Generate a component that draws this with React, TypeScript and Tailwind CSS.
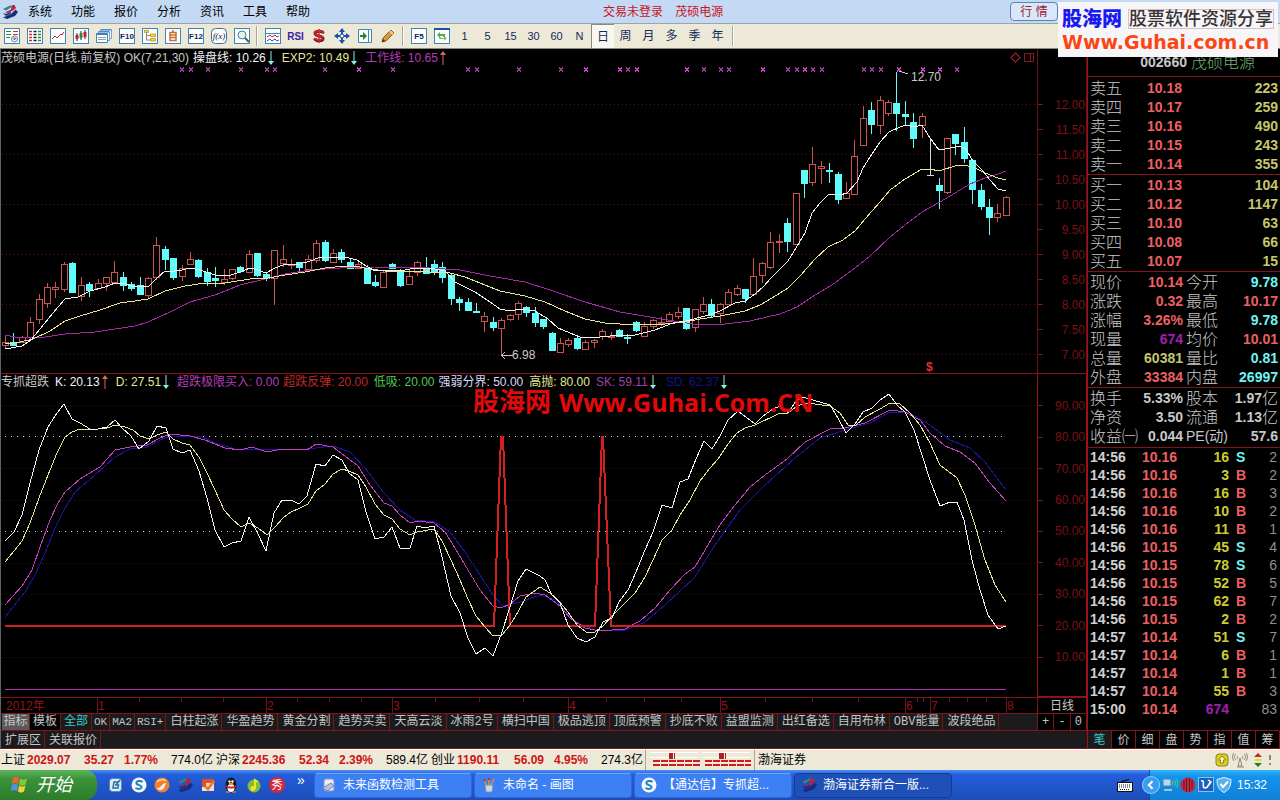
import type { ReactNode } from 'react';
import cls from 'clsx';

type Point = [number, number];
// kind, high, body top, body bottom, low
type Candle = ['u' | 'd' | 'w', number, number, number, number];

const candles: Candle[] = [
  ['u', 335, 342, 345, 349], ['d', 333, 342, 345, 346], ['u', 336, 337, 342, 343], ['u', 317, 322, 337, 340],
  ['u', 294, 299, 319, 324], ['u', 283, 287, 303, 308], ['u', 282, 287, 289, 298], ['u', 262, 264, 289, 292],
  ['d', 262, 263, 292, 292], ['u', 277, 285, 296, 301], ['d', 282, 284, 290, 297], ['u', 279, 283, 288, 289],
  ['u', 277, 277, 283, 291], ['u', 261, 272, 282, 282], ['d', 272, 277, 285, 291], ['d', 282, 284, 288, 291],
  ['d', 277, 285, 294, 294], ['u', 277, 278, 295, 299], ['u', 237, 245, 277, 280], ['d', 246, 249, 259, 270],
  ['d', 258, 258, 277, 280], ['u', 265, 268, 276, 281], ['u', 252, 259, 264, 264], ['d', 259, 260, 276, 278],
  ['d', 268, 272, 281, 286], ['d', 267, 278, 280, 287], ['u', 269, 279, 282, 285], ['u', 269, 269, 278, 280],
  ['d', 266, 267, 271, 273], ['u', 250, 254, 272, 273], ['d', 253, 253, 275, 277], ['d', 273, 274, 278, 281],
  ['u', 250, 250, 278, 305], ['u', 245, 259, 263, 267], ['u', 259, 264, 265, 269], ['d', 262, 262, 267, 272],
  ['u', 255, 259, 269, 270], ['u', 240, 243, 260, 263], ['d', 240, 242, 260, 262], ['u', 249, 253, 262, 263],
  ['d', 249, 252, 259, 263], ['d', 258, 262, 268, 268], ['u', 262, 264, 268, 268], ['d', 265, 268, 283, 283],
  ['d', 275, 282, 285, 287], ['u', 270, 272, 287, 287], ['d', 263, 264, 268, 268], ['d', 269, 272, 285, 287],
  ['u', 270, 276, 284, 284], ['u', 261, 262, 272, 276], ['d', 257, 268, 273, 273], ['d', 260, 264, 272, 275],
  ['d', 262, 267, 277, 283], ['d', 273, 275, 298, 305], ['d', 297, 299, 302, 311], ['d', 298, 302, 310, 310],
  ['d', 303, 311, 312, 312], ['u', 312, 316, 321, 332], ['d', 317, 322, 327, 331], ['u', 318, 320, 328, 356],
  ['u', 314, 315, 319, 321], ['u', 301, 303, 314, 320], ['d', 306, 307, 312, 317], ['d', 307, 313, 322, 327],
  ['d', 319, 319, 326, 329], ['d', 332, 333, 350, 350], ['u', 338, 343, 352, 352], ['u', 338, 340, 344, 347],
  ['d', 335, 338, 348, 350], ['u', 340, 342, 349, 349], ['u', 339, 340, 342, 348], ['u', 329, 331, 336, 340],
  ['u', 332, 336, 337, 340], ['d', 329, 330, 336, 337], ['d', 334, 337, 338, 344], ['d', 321, 322, 330, 332],
  ['u', 322, 326, 336, 337], ['u', 319, 320, 326, 329], ['u', 317, 322, 323, 326], ['u', 312, 314, 321, 321],
  ['u', 307, 312, 316, 319], ['d', 308, 308, 328, 330], ['u', 309, 309, 327, 332], ['u', 297, 304, 311, 314],
  ['d', 299, 304, 315, 318], ['u', 303, 304, 313, 323], ['u', 289, 292, 304, 304], ['u', 285, 288, 294, 296],
  ['d', 289, 289, 298, 303], ['u', 258, 276, 294, 294], ['u', 262, 263, 275, 283], ['u', 232, 242, 267, 269],
  ['u', 234, 241, 242, 253], ['d', 218, 223, 241, 252], ['u', 193, 193, 244, 244], ['d', 170, 170, 183, 198],
  ['u', 147, 164, 182, 186], ['u', 161, 166, 168, 184], ['d', 163, 170, 171, 183], ['d', 172, 174, 199, 204],
  ['u', 182, 193, 198, 198], ['u', 140, 156, 194, 194], ['u', 106, 118, 145, 145], ['d', 102, 110, 124, 134],
  ['u', 96, 100, 125, 134], ['u', 100, 102, 113, 116], ['d', 72, 103, 113, 131], ['d', 101, 114, 116, 126],
  ['d', 113, 122, 138, 148], ['u', 113, 116, 125, 138], ['w', 139, 175, 175, 175], ['d', 178, 185, 190, 209],
  ['u', 138, 138, 192, 194], ['d', 134, 134, 143, 155], ['d', 127, 142, 158, 163], ['d', 159, 160, 189, 204],
  ['d', 184, 190, 206, 210], ['d', 199, 207, 217, 235], ['u', 204, 213, 217, 222], ['u', 196, 197, 215, 215],
];

const maFast: Point[] = [
  [5, 349], [22, 346], [31, 340], [40, 329], [53, 313], [65, 299], [78, 297], [90, 291], [105, 287], [115, 283],
  [123, 283], [135, 287], [149, 286], [157, 278], [165, 271], [175, 271], [182, 270], [190, 268], [200, 270],
  [215, 275], [228, 276], [240, 272], [250, 268], [258, 270], [266, 273], [275, 268], [283, 265], [300, 264],
  [310, 261], [318, 258], [334, 257], [345, 257], [357, 260], [366, 266], [375, 271], [385, 270], [400, 271],
  [415, 268], [430, 268], [445, 271], [455, 282], [475, 292], [490, 302], [500, 309], [510, 311], [520, 309],
  [535, 311], [548, 319], [558, 328], [570, 333], [580, 337], [590, 338], [610, 336], [635, 335], [655, 330],
  [673, 323], [686, 321], [705, 316], [720, 311], [735, 303], [745, 301], [755, 294], [763, 287], [771, 278],
  [780, 269], [788, 261], [796, 248], [805, 233], [812, 213], [820, 203], [829, 194], [840, 195], [847, 193],
  [857, 182], [863, 168], [872, 154], [880, 142], [889, 132], [900, 127], [906, 125], [915, 127], [922, 125],
  [930, 138], [939, 150], [945, 149], [960, 146], [966, 149], [972, 160], [982, 170], [990, 180], [998, 189],
  [1006, 191],
];
const maMid: Point[] = [
  [5, 344], [20, 342], [33, 339], [50, 331], [65, 321], [80, 316], [100, 310], [120, 303], [135, 301], [148, 299],
  [165, 291], [185, 286], [205, 283], [225, 283], [250, 279], [268, 278], [285, 275], [305, 272], [325, 268],
  [345, 266], [360, 267], [370, 269], [385, 271], [400, 271], [430, 272], [450, 273], [465, 277], [475, 281],
  [500, 291], [525, 296], [545, 302], [565, 311], [585, 319], [605, 323], [635, 325], [665, 324], [685, 322],
  [700, 319], [720, 316], [745, 311], [760, 305], [772, 298], [788, 288], [800, 276], [815, 259], [828, 247],
  [843, 240], [855, 231], [865, 219], [880, 202], [890, 190], [905, 179], [922, 169], [930, 169], [939, 171],
  [955, 166], [965, 165], [975, 168], [985, 173], [998, 178], [1006, 180],
];
const maSlow: Point[] = [
  [5, 335], [20, 338], [45, 337], [65, 334], [95, 332], [115, 329], [135, 326], [148, 322], [170, 312], [190, 302],
  [215, 295], [240, 285], [265, 279], [285, 274], [310, 270], [340, 268], [375, 267], [400, 267], [430, 268],
  [460, 270], [490, 276], [525, 282], [550, 290], [585, 302], [620, 312], [650, 317], [680, 322], [700, 325],
  [725, 324], [750, 321], [780, 314], [797, 307], [812, 297], [835, 283], [855, 268], [870, 256], [890, 237],
  [905, 225], [922, 212], [940, 202], [955, 193], [970, 184], [985, 178], [998, 174], [1006, 171],
];
const lineK: Point[] = [
  [5, 541], [14, 532], [22, 515], [30, 483], [39, 450], [48, 427], [57, 413], [64, 404], [72, 419], [80, 423],
  [90, 429], [98, 429], [107, 427], [115, 420], [122, 428], [131, 436], [139, 449], [149, 441], [157, 426],
  [166, 428], [173, 449], [182, 453], [190, 450], [199, 471], [207, 498], [215, 530], [224, 547], [232, 543],
  [241, 541], [249, 517], [258, 534], [266, 551], [274, 513], [282, 500], [291, 500], [299, 504], [307, 496],
  [316, 464], [325, 466], [333, 455], [342, 460], [349, 473], [358, 480], [366, 512], [375, 539], [384, 537],
  [392, 527], [400, 548], [410, 548], [417, 526], [425, 528], [434, 526], [442, 557], [451, 596], [460, 613],
  [468, 638], [476, 654], [485, 648], [493, 656], [502, 632], [510, 607], [518, 581], [526, 569], [540, 576],
  [545, 580], [552, 595], [560, 603], [568, 625], [577, 638], [586, 642], [595, 637], [603, 622], [612, 618],
  [619, 602], [628, 590], [636, 572], [645, 550], [653, 532], [662, 505], [672, 508], [680, 482], [688, 479],
  [696, 459], [704, 441], [712, 449], [720, 436], [728, 420], [738, 411], [755, 424], [763, 416], [773, 409],
  [780, 406], [788, 413], [796, 401], [803, 397], [813, 400], [830, 405], [838, 418], [846, 433], [855, 424],
  [863, 412], [872, 408], [880, 400], [889, 394], [897, 405], [905, 412], [914, 430], [922, 455], [930, 480],
  [940, 506], [950, 502], [957, 502], [964, 520], [972, 560], [980, 590], [988, 615], [998, 629], [1006, 626],
];
const lineD: Point[] = [
  [5, 562], [14, 551], [22, 541], [30, 523], [39, 498], [48, 475], [57, 453], [65, 437], [72, 432], [80, 429],
  [98, 429], [107, 428], [115, 425], [125, 427], [133, 430], [140, 436], [149, 439], [157, 435], [166, 432],
  [173, 439], [182, 443], [190, 445], [199, 457], [207, 473], [215, 490], [224, 510], [232, 519], [241, 527],
  [249, 523], [258, 528], [267, 535], [275, 527], [283, 518], [291, 512], [300, 508], [308, 504], [316, 491],
  [325, 484], [333, 474], [342, 469], [349, 471], [358, 475], [366, 487], [375, 504], [384, 515], [392, 519],
  [400, 529], [410, 535], [417, 532], [434, 529], [442, 541], [451, 560], [460, 580], [468, 599], [476, 616],
  [485, 627], [493, 636], [502, 635], [510, 625], [518, 612], [526, 597], [540, 587], [550, 593], [558, 600],
  [568, 612], [577, 625], [586, 632], [595, 632], [603, 626], [612, 616], [620, 608], [635, 593], [645, 577],
  [653, 560], [662, 540], [672, 530], [680, 515], [690, 500], [700, 481], [710, 468], [718, 459], [728, 444],
  [737, 433], [745, 428], [755, 425], [778, 414], [788, 413], [797, 406], [807, 403], [830, 406], [840, 413],
  [848, 425], [856, 425], [865, 417], [880, 409], [890, 403], [900, 404], [910, 413], [920, 425], [930, 443],
  [940, 465], [957, 478], [965, 495], [975, 525], [985, 560], [995, 585], [1006, 602],
];
const lineSK: Point[] = [
  [5, 605], [22, 586], [32, 570], [40, 547], [50, 520], [58, 503], [65, 492], [80, 479], [100, 467], [115, 450],
  [130, 447], [147, 445], [160, 438], [170, 434], [190, 436], [205, 440], [225, 448], [240, 450], [252, 447],
  [267, 452], [282, 449], [307, 450], [316, 444], [333, 447], [345, 456], [358, 466], [370, 485], [384, 503],
  [392, 506], [400, 515], [410, 523], [418, 521], [434, 523], [445, 532], [455, 548], [468, 570], [480, 590],
  [493, 606], [501, 608], [510, 604], [520, 596], [535, 593], [545, 595], [560, 606], [570, 618], [585, 628],
  [600, 631], [625, 629], [640, 621], [655, 608], [670, 590], [685, 574], [695, 567], [705, 550], [720, 525],
  [735, 505], [750, 487], [765, 475], [787, 459], [805, 442], [830, 429], [845, 428], [865, 423], [890, 410],
  [905, 412], [920, 420], [930, 433], [945, 446], [960, 452], [975, 463], [990, 483], [1006, 501],
];
const lineSD: Point[] = [
  [5, 617], [25, 592], [35, 575], [45, 553], [55, 528], [65, 508], [75, 492], [95, 475], [115, 457], [130, 449],
  [147, 447], [160, 440], [170, 436], [200, 436], [215, 443], [235, 449], [265, 449], [307, 449], [333, 446],
  [350, 452], [365, 468], [384, 493], [400, 510], [415, 520], [435, 522], [450, 532], [465, 552], [480, 575],
  [493, 595], [503, 606], [520, 602], [540, 595], [555, 600], [575, 622], [595, 630], [625, 630], [645, 622],
  [665, 605], [695, 577], [715, 545], [740, 510], [765, 485], [795, 458], [820, 438], [845, 430], [870, 423],
  [890, 412], [910, 413], [930, 425], [950, 440], [970, 448], [985, 462], [1006, 490],
];
const signal: Point[] = [
  [5, 626], [494, 626], [501, 437], [503, 437], [510, 626], [595, 626], [602, 437], [603, 437], [611, 626], [1006, 626],
];

const marks = [
  182, 191, 208, 241, 267, 275, 325, 359, 393, 468, 477, 519, 561, 586, 620, 628, 637, 687, 704, 721, 729, 763, 788,
  797, 805, 813, 822, 864, 872, 881, 899, 923, 940, 957,
];
const boldMarks = [359, 586, 620, 637, 687, 763, 805, 899, 923, 940];

const menus = ['系统', '功能', '报价', '分析', '资讯', '工具', '帮助'];
const periods = ['1', '5', '15', '30', '60', 'N', '日', '周', '月', '多', '季', '年'];
const prices = ['12.00', '11.50', '11.00', '10.50', '10.00', '9.50', '9.00', '8.50', '8.00', '7.50', '7.00'];
const levels = ['90.00', '80.00', '70.00', '60.00', '50.00', '40.00', '30.00', '20.00', '10.00'];
const months: [string, number][] = [['1', 97], ['2', 266], ['3', 392], ['4', 568], ['5', 720], ['6', 905], ['7', 930], ['8', 1006]];
const minorTicks = [139, 181, 223, 297, 329, 361, 435, 479, 523, 606, 644, 681, 765, 812, 858, 917, 923, 949, 967, 986];

const templates = [
  'OK', 'MA2', 'RSI+', '白柱起涨', '华盈趋势', '黄金分割', '趋势买卖', '天高云淡', '冰雨2号', '横扫中国', '极品逃顶',
  '顶底预警', '抄底不败', '益盟监测', '出红备选', '自用布林', 'OBV能量', '波段绝品',
];

const asks = [['卖五', '10.18', '223'], ['卖四', '10.17', '259'], ['卖三', '10.16', '490'], ['卖二', '10.15', '243'], ['卖一', '10.14', '355']];
const bids = [['买一', '10.13', '104'], ['买二', '10.12', '1147'], ['买三', '10.10', '63'], ['买四', '10.08', '66'], ['买五', '10.07', '15']];

const RED = 'text-[#ee6060]';
const CYAN = 'text-[#6ff5f5]';
const GREY = 'text-[#c8c8c8]';
const PURPLE = 'text-[#a01fb0]';

const stats = [
  ['现价', '10.14', RED, '今开', '9.78', CYAN],
  ['涨跌', '0.32', RED, '最高', '10.17', RED],
  ['涨幅', '3.26%', RED, '最低', '9.78', CYAN],
  ['现量', '674', PURPLE, '均价', '10.01', RED],
  ['总量', '60381', 'text-[#c6c66c]', '量比', '0.81', CYAN],
  ['外盘', '33384', RED, '内盘', '26997', CYAN],
];
const ratios = [
  ['换手', '5.33%', GREY, '股本', '1.97亿', GREY],
  ['净资', '3.50', GREY, '流通', '1.13亿', GREY],
  ['收益㈠', '0.044', GREY, 'PE(动)', '57.6', GREY],
];
const trades = [
  ['14:56', '10.16', '16', 'S', '2'],
  ['14:56', '10.16', '3', 'B', '2'],
  ['14:56', '10.16', '16', 'B', '3'],
  ['14:56', '10.16', '10', 'B', '2'],
  ['14:56', '10.16', '11', 'B', '1'],
  ['14:56', '10.15', '45', 'S', '4'],
  ['14:56', '10.15', '78', 'S', '6'],
  ['14:56', '10.15', '52', 'B', '5'],
  ['14:56', '10.15', '62', 'B', '7'],
  ['14:56', '10.15', '2', 'B', '2'],
  ['14:57', '10.14', '51', 'S', '7'],
  ['14:57', '10.14', '6', 'B', '1'],
  ['14:57', '10.14', '1', 'B', '1'],
  ['14:57', '10.14', '55', 'B', '3'],
  ['15:00', '10.14', '674', '', '83'],
];

const indexes = [
  ['上证', '2029.07', '35.27', '1.77%', '774.0亿'],
  ['沪深', '2245.36', '52.34', '2.39%', '589.4亿'],
  ['创业', '1190.11', '56.09', '4.95%', '274.3亿'],
];

function Icon({ children, size = 16 }: { children: ReactNode; size?: number }) {
  return (
    <svg width={size} height={size} viewBox="0 0 16 16" fill="none" aria-hidden="true">
      {children}
    </svg>
  );
}

function Frame() {
  return <rect x="0.5" y="0.5" width="15" height="15" fill="#fff" stroke="#3f86b8" />;
}

function FrameText({ children }: { children: string }) {
  return (
    <Icon>
      <Frame />
      <text x="8" y="11" textAnchor="middle" fontSize="8" fill="#101a60" fontFamily="Liberation Sans" fontWeight="700">
        {children}
      </text>
    </Icon>
  );
}

function BrandMark() {
  return (
    <Icon>
      <path d="M1 5 8 1.500l2.500 1L4 6.500z" fill="#2c8a82" />
      <path d="M10 1h2.500l1.500 3-3 2.500-5 2.500-3-.5 6-3z" fill="#c01f36" />
      <path d="M13.500 5.500 16 8l-3 4-8 3-4-1.500L9 10z" fill="#1c2a78" />
      <path d="M1 9l3 1 5-2v1.500L4 12z" fill="#1c2a78" />
    </Icon>
  );
}

const mainTools: [string, ReactNode][] = [
  ['行情', <Icon key="a"><Frame /><path d="M2 3.5h5M2 6.5h5M2 9.5h4" stroke="#2b8a3a" /><path d="M9 3.5h5M9 6.5h5" stroke="#d03030" /><circle cx="10.500" cy="11" r="3" fill="#e8eef4" stroke="#6a88a8" /><path d="M10 9.500v2l2-1" stroke="#456" /></Icon>],
  ['列表', <Icon key="b"><Frame /><path d="M2 3.5h3M2 6.500h3M2 9.500h3M2 12.500h3" stroke="#d03030" strokeWidth="1.500" /><path d="M6.500 3.500h3M6.500 6.500h3M6.500 9.500h3M6.500 12.500h3" stroke="#222" strokeWidth="1.500" /><path d="M11 3.500h3M11 6.500h3M11 9.500h3M11 12.500h3" stroke="#2b8a3a" strokeWidth="1.500" /></Icon>],
  ['分时', <Icon key="c"><Frame /><path d="M2 11l3-3 2 2 4-4 1 1 2-3" stroke="#c02838" /></Icon>],
  ['K线', <Icon key="d"><Frame /><path d="M4 5v8M8 3v9M12 2v9" stroke="#222" /><path d="M2.500 7h3v4h-3z" fill="#c02030" /><path d="M6.500 5h3v5h-3z" fill="#2b8a3a" /><path d="M10.500 4h3v5h-3z" fill="#c02030" /></Icon>],
  ['多窗口', <Icon key="e"><path d="M4.500 1.500h11v9h-11z" fill="#fff" stroke="#6aa0cc" /><path d="M2.500 3.500h11v9h-11z" fill="#fff" stroke="#6aa0cc" /><path d="M.5 5.500h11v9H.5z" fill="#fff" stroke="#3f86b8" /><path d="M1 6.500h10M3 4h10M5 2h10" stroke="#3878c8" /><path d="M2 9.500h8M2 11.500h8" stroke="#999" /></Icon>],
  ['F10', <FrameText key="f">F10</FrameText>],
  ['板块', <Icon key="g"><Frame /><path d="M4.500 4v8.500M4.500 7.500h4M4.500 12h4" stroke="#888" /><path d="M2.500 2.500h4v2h-4zM8.500 6h5v2.500h-5zM8.500 10.500h5V13h-5z" fill="#f5dc60" stroke="#c8a020" /></Icon>],
  ['自选', <Icon key="h"><Frame /><path d="M5 4.500h6v8H5zM5 7h6M5 9.500h6M8 2v2.500" stroke="#c87030" strokeWidth="1.500" /></Icon>],
  ['F12', <FrameText key="i">F12</FrameText>],
  ['公式', <Icon key="j"><rect x="0.5" y="0.5" width="15" height="15" rx="4" fill="#fff" stroke="#3f6f98" /><text x="8" y="11" textAnchor="middle" fontSize="9" fontStyle="italic" fill="#101a40" fontFamily="Liberation Serif">f(x)</text></Icon>],
  ['查找', <Icon key="k"><Frame /><circle cx="8" cy="7" r="4" fill="#dff3f3" stroke="#4a8088" /><path d="M11 10l4 4" stroke="#555" strokeWidth="2" /></Icon>],
];
const drawTools: [string, ReactNode][] = [
  ['指标', <Icon key="a"><Frame /><path d="M1 5.500h14" stroke="#3f86b8" /><path d="M2 9l3-2 2 2 3-2 2 2 2-1" stroke="#c02838" /><path d="M2 13l3-2 2 2 3-2 2 2 2-1" stroke="#3050a0" /></Icon>],
  ['RSI', <span key="b" className="font-['Liberation_Sans'] text-[10px] font-bold text-[#3c1fa0]">RSI</span>],
  ['除权', <Icon key="c"><path d="M12 5.500c0-3-8-3-8 0s8 2 8 5-7 3-8.500 0" stroke="#7a1418" strokeWidth="3" /><path d="M11.500 5c0-3-7.500-3-7.500 0s7.500 2.500 7.500 5-7 2.500-8 0M8 1v14" stroke="#d02830" strokeWidth="1.500" /></Icon>],
  ['移动', <Icon key="d"><path d="M8 0l3 4H9v3h3V5l4 3-4 3V9H9v3h2l-3 4-3-4h2V9H4v2L0 8l4-3v2h3V4H5z" fill="#1c50b0" /><circle cx="8" cy="8" r="2" fill="#fff" stroke="#1c50b0" /></Icon>],
  ['插入', <Icon key="e"><path d="M1.500 1.500h10v13h-10zM11.500 1.500h3v13h-3z" fill="#fff" stroke="#3f86b8" /><path d="M3 7h3V4l4 4-4 4V9H3z" fill="#1e8a2a" /></Icon>],
  ['画线', <Icon key="f"><path d="M2 14l1-4 8-8 3 3-8 8z" fill="#d89840" stroke="#8a5a20" /><path d="M10 3l3 3" stroke="#f0d090" strokeWidth="2" /><path d="M2 14l1-3 2 2z" fill="#402a10" /></Icon>],
];
const pageTools: [string, ReactNode][] = [
  ['F5', <FrameText key="a">F5</FrameText>],
  ['刷新', <Icon key="b"><Frame /><path d="M0 0h16v2H0z" fill="#1c50a0" /><path d="M3 7l3-3v2h5v3H9V8H6v2z" fill="#4cae4c" /><path d="M13 10l-3 3v-2H5V9h2v1h3V8z" fill="#78c858" /></Icon>],
];

function ToolButton({ name, children }: { name: string; children: ReactNode }) {
  return (
    <button aria-label={name} className="flex h-6 w-[23px] items-center justify-center">
      {children}
    </button>
  );
}

function Divider() {
  return <div className="mx-[3px] h-5 w-0.5 border-l border-[#a8a594] bg-white" />;
}

function MenuBar() {
  return (
    <header className="flex h-[23px] items-center bg-[#c4daf4] text-xs text-black">
      <div className="flex w-[28px] shrink-0 pl-0.5">
        <BrandMark />
      </div>
      <nav className="flex gap-[19px]">
        {menus.map(m => (
          <button key={m}>{m}</button>
        ))}
      </nav>
      <div className="ml-[293px] flex gap-3 text-[#c8141e]">
        <span>交易未登录</span>
        <span>茂硕电源</span>
      </div>
      <button className="mr-[222px] ml-auto h-[19px] w-[48px] rounded border border-[#5a86b4] bg-[#d8e8fa] text-[#a02030]">
        行 情
      </button>
    </header>
  );
}

function ToolBar() {
  return (
    <div className="flex h-[26px] items-center border-t border-b border-t-[#9aa4ac] border-b-[#8c8a7c] bg-[#ece9d8] text-[11px] text-[#14285a]">
      {mainTools.map(([name, icon]) => (
        <ToolButton key={name} name={name}>{icon}</ToolButton>
      ))}
      <Divider />
      {drawTools.map(([name, icon]) => (
        <ToolButton key={name} name={name}>{icon}</ToolButton>
      ))}
      <Divider />
      {pageTools.map(([name, icon]) => (
        <ToolButton key={name} name={name}>{icon}</ToolButton>
      ))}
      {periods.map(p => (
        <button
          key={p}
          className={cls(
            'h-6 w-[23px]',
            p === '日' && 'border-t border-l border-[#8c8a7c] bg-[#f8f7f2]',
            /[^\w]/.test(p) && 'text-xs',
          )}
        >
          {p}
        </button>
      ))}
      <Divider />
    </div>
  );
}

function Banner() {
  return (
    <div className="absolute top-0.5 right-0.5 flex h-[55px] w-[220px] flex-col bg-[#f6f6f8] px-1 pt-1 whitespace-nowrap">
      <div className="flex h-[26px] items-center justify-between">
        <span className="text-[20px] leading-6 font-black text-[#1a1af0]">股海网</span>
        <span className="border border-[#d8c0c0] text-[18px] leading-[18px] font-medium text-[#3a3438]">股票软件资源分享</span>
      </div>
      <span className="font-['DejaVu_Sans'] text-[19px] leading-5 font-bold text-[#fa4614]">Www.Guhai.com.cn</span>
    </div>
  );
}

function Arrow({ up }: { up?: boolean }) {
  return (
    <svg width="6" height="14" viewBox="0 0 6 14" className="mx-0.5" aria-hidden="true">
      {up ? (
        <path d="M2.500 14V4H0L3 0l3 4H3.500v10z" fill="#e06464" />
      ) : (
        <path d="M2.500 0v10H0l3 4 3-4H3.500V0z" fill="#8ef0e0" />
      )}
    </svg>
  );
}

function Line({ points, color, width = 1 }: { points: Point[]; color: string; width?: number }) {
  return <polyline points={points.map(p => p.join(',')).join(' ')} fill="none" stroke={color} strokeWidth={width} />;
}

function Axis({ labels, className, bright }: { labels: string[]; className: string; bright?: boolean }) {
  const border = bright ? 'border-[#a01010]' : 'border-[#6c1018]';
  return (
    <div className={cls('flex w-[50px] shrink-0 flex-col border-x text-xs text-[#7c1016]', border, className)}>
      {labels.map(l => (
        <div key={l} className="flex flex-1 items-center justify-between pr-px">
          <span className="h-px w-[5px] bg-[#8c1018]" />
          {l}
        </div>
      ))}
    </div>
  );
}

function PriceChart() {
  return (
    <section className="flex border-b border-[#801418]">
      <div className="relative min-w-0 flex-1">
        <svg viewBox="1 49 1036 324" className="block w-full" shapeRendering="crispEdges">
          {[104, 154, 204, 254, 304, 354].map(y => (
            <path key={y} d={`M2 ${y}.5H1037`} stroke="#641014" strokeDasharray="1 3" />
          ))}
          {candles.map(([kind, high, top, bottom, low], i) => {
            const x = Math.round(5 + i * 8.41);
            if (kind === 'w') {
              return <path key={i} d={`M${x + 0.5} ${high}V${low}M${x - 3} ${low}.5h7`} stroke="#d8d8d8" />;
            }
            const h = Math.max(bottom - top, 1);
            return kind === 'd' ? (
              <g key={i} fill="#62fbfb">
                <rect x={x} y={high} width="1" height={low - high} />
                <rect x={x - 3} y={top} width="7" height={h + 1} />
              </g>
            ) : (
              <g key={i} stroke="#cc5450">
                <path d={`M${x + 0.5} ${high}V${top}M${x + 0.5} ${bottom}V${low}`} />
                <rect x={x - 2.5} y={top + 0.5} width="6" height={h} fill="#000" />
              </g>
            );
          })}
          <Line points={maSlow} color="#a828ac" />
          <Line points={maMid} color="#e6e696" />
          <Line points={maFast} color="#f4f4f4" />
          {marks.map(x => (
            <path
              key={x}
              d={`M${x - 2} 67.500l4 4M${x + 2} 67.500l-4 4`}
              stroke={boldMarks.includes(x) ? '#d040d0' : '#a03ca0'}
              strokeWidth={boldMarks.includes(x) ? 2 : 1}
            />
          ))}
          <path d="M899 71l9 3M501.500 355.500h11M505 352l-3.500 3.500 3.500 3.500" stroke="#c8c8c8" fill="none" />
          <path d="M1015.500 53l4.500 4.500-4.500 4.500-4.500-4.500zM1024.500 53.500h9v8h-9zM1030.500 53.500v8" stroke="#8c1420" fill="none" />
          <g fontSize="12" fill="#c8c8c8" fontFamily="Liberation Sans">
            <text x="911" y="81">12.70</text>
            <text x="512" y="359">6.98</text>
            <text x="926" y="371" fill="#e03030" fontWeight="700">$</text>
          </g>
        </svg>
        <div className="absolute top-0 left-0 flex h-[17px] items-center text-xs whitespace-nowrap text-[#c8c8c8]">
          <span>茂硕电源(日线.前复权) OK(7,21,30)</span>
          <span className="ml-1 text-[#f4f4f4]">操盘线: 10.26</span>
          <Arrow />
          <span className="ml-1.5 text-[#e6e696]">EXP2: 10.49</span>
          <Arrow />
          <span className="ml-1.5 text-[#b43cb8]">工作线: 10.65</span>
          <Arrow up />
        </div>
      </div>
      <Axis labels={prices} className="pt-[43px] pb-[6px]" />
    </section>
  );
}

function OscillatorChart() {
  return (
    <section className="flex">
      <div className="relative min-w-0 flex-1">
        <svg viewBox="1 374 1036 323" className="block w-full" shapeRendering="crispEdges">
          {[405, 468, 500, 563, 594, 657].map(y => (
            <path key={y} d={`M2 ${y}.5H1037`} stroke="#4c0c10" strokeDasharray="1 3" />
          ))}
          {[436, 531].map(y => (
            <path key={y} d={`M5 ${y}.5H1006`} stroke="#d8d8d8" strokeDasharray="1 5" />
          ))}
          <Line points={lineSD} color="#1c14a4" />
          <Line points={lineSK} color="#c040c0" />
          <Line points={signal} color="#d42020" width={2} />
          <Line points={lineD} color="#e6e696" />
          <Line points={lineK} color="#f4f4f4" />
          <rect x="5" y="689" width="1001" height="1" fill="#b038b8" />
        </svg>
        <div className="absolute top-0 left-0 flex h-4 items-center text-xs whitespace-nowrap">
          <span className="text-[#c8c8c8]">专抓超跌</span>
          <span className="ml-1.5 text-[#f4f4f4]">K: 20.13</span>
          <Arrow up />
          <span className="ml-1.5 text-[#e6e696]">D: 27.51</span>
          <Arrow />
          <span className="ml-1.5 text-[#b43cb8]">超跌极限买入: 0.00</span>
          <span className="ml-1 text-[#c02828]">超跌反弹: 20.00</span>
          <span className="ml-1.5 text-[#50c850]">低吸: 20.00</span>
          <span className="ml-1 text-[#d8d8f4]">强弱分界: 50.00</span>
          <span className="ml-1.5 text-[#e6e696]">高抛: 80.00</span>
          <span className="ml-1.5 text-[#a040a8]">SK: 59.11</span>
          <Arrow />
          <span className="ml-2 text-[#14148c]">SD: 62.37</span>
          <Arrow />
        </div>
        <div className="absolute top-4 left-[472px] flex h-6 items-center gap-2 text-[26px] leading-6 font-bold whitespace-nowrap text-[#e00a0a]">
          <span>股海网</span>
          <span className="font-['Open_Sans'] text-[25px]">Www.Guhai.Com.CN</span>
        </div>
      </div>
      <Axis labels={levels} className="border-b pt-4 pb-[23px]" bright />
    </section>
  );
}

function Timeline() {
  return (
    <div className="flex h-4 border-t border-[#801418]">
      <div className="min-w-0 flex-1">
        <svg viewBox="1 698 1036 15" className="block w-full" shapeRendering="crispEdges">
          <path d={months.map(([, x]) => `M${x}.5 698v15`).join('')} stroke="#701218" />
          <path d={minorTicks.map(x => `M${x}.5 698v4`).join('')} stroke="#701218" />
          <g fontSize="12" fill="#8c161c" className="font-['Liberation_Sans','Noto_Sans_CJK_SC',sans-serif]">
            <text x="6" y="710">2012年</text>
            {months.map(([m, x]) => (
              <text key={m} x={x + 1} y="710">{m}</text>
            ))}
          </g>
        </svg>
      </div>
      <div className="flex w-[50px] shrink-0 items-center justify-center border-x border-[#801418] text-xs text-[#c8c8c8]">
        日线
      </div>
    </div>
  );
}

const tab = 'flex h-full items-center justify-center border-r border-[#801418]';

function TemplateTabs() {
  return (
    <>
      <div className="flex h-[17px] items-stretch border-t border-[#801418] bg-[#1b1b1d] pl-px font-['Liberation_Mono','Noto_Sans_CJK_SC',monospace] text-xs whitespace-nowrap text-[#c4c4c4]">
        <button className={cls(tab, 'w-[28px] bg-[#5a5a5c]')}>指标</button>
        <button className={cls(tab, 'w-[31px] bg-black')}>模板</button>
        <button className={cls(tab, 'w-[31px] text-[#3cc8c8]')}>全部</button>
        {templates.map(t => (
          <button key={t} className={cls(tab, /^[A-Z]+[\d+]?$/.test(t) ? 'px-0.5 text-[11px]' : 'pr-[3px] pl-1')}>
            {t}
          </button>
        ))}
        <div className="ml-auto flex w-[50px] border-x border-[#801418] bg-black">
          <button className={cls(tab, 'flex-1')}>+</button>
          <button className={cls(tab, 'flex-1')}>-</button>
          <button className="flex-1">0</button>
        </div>
      </div>
      <div className="flex h-[18px] border-t border-[#801418] bg-[#1b1b1d] text-xs text-[#c4c4c4]">
        <button className={cls(tab, 'pr-[3px] pl-1')}>扩展区</button>
        <button className={cls(tab, 'pr-[3px] pl-1')}>关联报价</button>
      </div>
    </>
  );
}

const panelTable = 'w-full table-fixed border-b border-[#801418] border-separate border-spacing-0';

function OrderBook({ rows, label, className }: { rows: string[][]; label: string; className: string }) {
  return (
    <table aria-label={label} className={cls(panelTable, className)}>
      <tbody>
        {rows.map(([name, price, volume]) => (
          <tr key={name} className="h-[19px] leading-[19px]">
            <td className="w-[50px] pl-0.5 text-base leading-[19px] font-light text-[#c8c8c8]">{name}</td>
            <td className={cls('w-[44px] text-right font-bold', RED)}>{price}</td>
            <td className="pr-0.5 text-right font-bold text-[#c6c66c]">{volume}</td>
          </tr>
        ))}
      </tbody>
    </table>
  );
}

function StatTable({ rows, label, className }: { rows: string[][]; label: string; className: string }) {
  return (
    <table aria-label={label} className={cls(panelTable, 'whitespace-nowrap', className)}>
      <tbody>
        {rows.map(([a, av, ac, b, bv, bc]) => (
          <tr key={a} className="h-[19px] leading-[19px]">
            <td className="w-[48px] pl-0.5 text-base leading-[19px] font-light text-[#c8c8c8]">{a}</td>
            <td className={cls('w-[47px] text-right font-bold', ac)}>{av}</td>
            <td className={cls('w-[50px] pl-[3px] leading-[19px] text-[#c8c8c8]', b.startsWith('PE') ? 'text-sm' : 'text-base font-light')}>{b}</td>
            <td className={cls('pr-0.5 text-right font-bold', bc)}>
              {bv.replace('亿', '')}
              {bv.endsWith('亿') && <span className="align-top text-base leading-[19px] font-light">亿</span>}
            </td>
          </tr>
        ))}
      </tbody>
    </table>
  );
}

function QuotePanel() {
  return (
    <aside className="flex w-[193px] shrink-0 flex-col border-l border-[#a01418] text-sm">
      <h1 className="flex h-[28px] items-end justify-end gap-1 border-b border-[#801418] pr-[25px] pb-1">
        <span className="leading-[19px] font-bold text-[#c8c8c8]">002660</span>
        <span className="text-base leading-[19px] font-light text-[#78b478]">茂硕电源</span>
      </h1>
      <OrderBook rows={asks} label="卖盘" className="pt-0.5" />
      <OrderBook rows={bids} label="买盘" className="pt-px" />
      <StatTable rows={stats} label="行情" className="pt-px" />
      <StatTable rows={ratios} label="财务" className="py-px" />
      <table aria-label="成交明细" className="w-full table-fixed font-bold">
        <tbody>
          {trades.map(([time, price, volume, side, count], i) => (
            <tr key={i} className="h-[18px] leading-[18px]">
              <td className="w-[50px] pl-0.5 text-[#d0d0d0]">{time}</td>
              <td className={cls('w-[39px] text-right', RED)}>{price}</td>
              <td className={cls('w-[52px] text-right', side ? 'text-[#cccc32]' : PURPLE)}>{volume}</td>
              <td className={cls('w-[20px] pl-[7px]', side === 'S' ? CYAN : RED)}>{side}</td>
              <td className="pr-[3px] text-right font-normal text-[#909090]">{count}</td>
            </tr>
          ))}
        </tbody>
      </table>
      <div className="mt-auto flex h-[18px] border-t border-[#801418] text-xs text-[#c8c8c8]">
        {['笔', '价', '细', '盘', '势', '指', '值', '筹'].map(t => (
          <button key={t} className={cls(tab, 'flex-1', t === '笔' && 'bg-[#1b1b1d] text-[#3cc8c8]')}>
            {t}
          </button>
        ))}
      </div>
    </aside>
  );
}

function StatusBar() {
  return (
    <div className="flex h-[21px] items-center border-t border-white bg-[#ece9d8] text-xs whitespace-nowrap text-black">
      {indexes.map(([name, value, change, percent, amount]) => (
        <div key={name} className="flex w-[215px] shrink-0 items-center pl-px">
          <span>{name}</span>
          <span className="w-[57px] pl-0.5 font-bold text-[#cc1414]">{value}</span>
          <span className="w-[40px] pl-0.5 font-bold text-[#cc1414]">{change}</span>
          <span className="w-[49px] pl-0.5 font-bold text-[#cc1414]">{percent}</span>
          <span>{amount}</span>
        </div>
      ))}
      <div className="flex h-full items-center border-x border-[#a8a594] px-[3px]">
        <svg width="102" height="16" viewBox="0 0 102 16" shapeRendering="crispEdges" aria-hidden="true">
          {[1, 53].map(x => (
            <g key={x}>
              <path d={`M${x} .5h48M${x} 5.500h48`} stroke="#fff" />
              <path d={`M${x + 3} 9h47M${x + 3} 13h47`} stroke="#cc1c1c" strokeWidth="2" strokeDasharray="7 1" />
            </g>
          ))}
          <path d="M20 1h4v6h-4zM25 1h1v6h-1zM70 1h5v6h-5zM76 1h1v6h-1z" fill="#b02020" />
        </svg>
      </div>
      <span className="pl-[3px]">渤海证券</span>
      <div className="ml-auto flex items-center gap-0.5 pr-2">
        <Icon><rect x="2" y="2" width="12" height="12" rx="3" fill="#d8cc28" stroke="#8c8414" /><path d="M8 4l3.500 4H9.500v3h-3V8h-2z" fill="#fff8b0" stroke="#8c8414" /></Icon>
        <Icon><path d="M6 14l2-8 2 8zM5 15h7M4 2c-2 2-2 4 0 6M12 2c2 2 2 4 0 6M2 1c-2 3-2 5 0 8M14 1c2 3 2 5 0 8M6 4c-1 1-1 2 0 3M10 4c1 1 1 2 0 3" stroke="#8c8870" /></Icon>
        <Icon><path d="M8 1l4 4H4z" fill="#d02020" /><path d="M5 7h6v2H5z" fill="#e8d820" /><path d="M4 11h8l-4 4z" fill="#208030" /></Icon>
        <svg width="4" height="16" viewBox="0 0 4 16" aria-hidden="true"><path d="M2 3v5M2 11v2" stroke="#888" strokeWidth="2" /></svg>
      </div>
    </div>
  );
}

const launchers: [string, ReactNode][] = [
  ['桌面', <Icon key="a"><rect x="1.500" y="1.500" width="12" height="13" rx="3" fill="#dcecf8" stroke="#4c88b8" /><path d="M10.500 5H6L5 11h5l.5-3H7M12 3L8 8" stroke="#2c6ca0" strokeWidth="1.500" /></Icon>],
  ['搜狗', <Icon key="b"><circle cx="8" cy="8" r="7.500" fill="#f4f8fc" /><path d="M11.500 5c-2-2-7-1-6 1.500C6.500 8.500 11 8 10.500 10.500 10 12.500 6 12 4.500 11" stroke="#2080c0" strokeWidth="2" /></Icon>],
  ['浏览', <Icon key="c"><circle cx="8" cy="8" r="7.500" fill="#f08030" /><path d="M3 11c4 1 5-5 9-5l-2 5c-2 3-6 2-7 0z" fill="#fff" /><path d="M3 5c3-3 7-3 9-1" stroke="#fcd8a0" strokeWidth="1.500" /></Icon>],
  ['渤海', <BrandMark key="d" />],
  ['行情', <Icon key="e"><rect x="2" y="2" width="12" height="12" fill="#f0dcd0" /><path d="M2 2h12v4H6v4H2z" fill="#e05020" /><path d="M5 9l3 3 6-8" stroke="#f07830" strokeWidth="2.500" /></Icon>],
  ['QQ', <Icon key="f"><ellipse cx="8" cy="8" rx="5.500" ry="7.500" fill="#181818" /><ellipse cx="8" cy="11" rx="3.500" ry="4" fill="#fff" /><path d="M3 8c3 2 7 2 10 0v2c-3 2-7 2-10 0z" fill="#d82020" /><circle cx="6.500" cy="4.500" r="1.200" fill="#fff" /><circle cx="9.500" cy="4.500" r="1.200" fill="#fff" /><path d="M6 6.500h4l-2 1.200zM3 15h4M9 15h4" fill="#f0a020" stroke="#f0a020" /></Icon>],
  ['音乐', <Icon key="g"><circle cx="8" cy="9" r="6.500" fill="#78c038" /><path d="M9 12V3l3 2" stroke="#f4e028" strokeWidth="2" /><circle cx="7" cy="11.500" r="2.500" fill="#f4e028" /></Icon>],
  ['秀', <span key="h" className="flex size-4 items-center justify-center rounded-full bg-[#d42838] text-[11px] text-white">秀</span>],
];

const tasks: [string, ReactNode][] = [
  ['未来函数检测工具', <Icon key="a"><rect x="3" y="2" width="10" height="12" rx="2" fill="#e8ecf8" stroke="#8894c0" /><path d="M2 11l8-5 3 3-7 5z" fill="#b8c0e0" stroke="#7884b0" /></Icon>],
  ['未命名 - 画图', <Icon key="b"><path d="M4 8h8l-1 7H5z" fill="#c8d8e8" stroke="#7890a8" /><path d="M5 8L3 2M8 8V1M10 8l3-6" stroke="#e09030" strokeWidth="1.500" /><path d="M3 2l1 2M8 1v2" stroke="#c03030" strokeWidth="2" /></Icon>],
  ['【通达信】专抓超...', <Icon key="c"><circle cx="8" cy="8" r="7.500" fill="#f4f8fc" /><path d="M11.500 5c-2-2-7-1-6 1.500C6.500 8.500 11 8 10.500 10.500 10 12.500 6 12 4.500 11" stroke="#2080c0" strokeWidth="2" /></Icon>],
  ['渤海证券新合一版...', <BrandMark key="d" />],
];

function TaskBar() {
  return (
    <footer className="flex h-[30px] items-center bg-linear-to-b from-[#4a90f4] via-[#245edb] via-15% to-[#1c4cb8] text-xs text-white">
      <button className="flex h-full w-[97px] shrink-0 items-center gap-1.5 rounded-r-xl bg-linear-to-b from-[#5cb45c] via-[#3a933a] via-30% to-[#2c7c2c] pl-2.5 text-[18px] italic">
        <svg width="20" height="18" viewBox="0 0 20 18" aria-hidden="true">
          <path d="M3 2c2-1.500 4-1.500 6 0L8 8C6 6.500 4 6.500 2 8z" fill="#f06030" />
          <path d="M10 2.500c2 1.500 4 1.500 7 0l-1.500 6c-2 1.500-4 1.500-6.500 0z" fill="#80c840" />
          <path d="M2 9c2-1.500 4-1.500 6 0l-1 6c-2-1.500-4-1.500-6.500 0z" fill="#5090f0" />
          <path d="M9 9.500c2 1.500 4 1.500 6.500 0l-1.500 6c-2 1.500-4 1.500-6 0z" fill="#f8d030" />
        </svg>
        开始
      </button>
      <div className="flex shrink-0 gap-[7px] pl-[11px]">
        {launchers.map(([name, icon]) => (
          <button key={name} aria-label={name}>{icon}</button>
        ))}
      </div>
      <span className="w-[29px] shrink-0 pb-2.5 pl-3 text-sm">»</span>
      <div className="flex min-w-0 gap-0.5">
        {tasks.map(([name, icon], i) => (
          <button
            key={name}
            className={cls(
              'flex h-[25px] w-[158px] items-center gap-1.5 rounded-sm border pl-1.5 whitespace-nowrap',
              i === 3 ? 'border-[#163c90] bg-[#1e50b8]' : 'border-[#2c68d8] border-t-[#6ca4fc] bg-[#3c80f4]',
            )}
          >
            {icon}
            {name}
          </button>
        ))}
      </div>
      <svg width="16" height="14" viewBox="0 0 16 14" className="mr-4 ml-auto shrink-0" aria-hidden="true">
        <path d="M4 3.500l8-2" stroke="#000" />
        <rect x="0.5" y="4.500" width="15" height="9" fill="#fff" stroke="#111" />
        <path d="M2 7h12M2 9h12M3 11.500h10" stroke="#111" strokeDasharray="1 1" />
      </svg>
      <div className="flex h-full w-[131px] shrink-0 items-center gap-0.5 border-l border-[#0c4ca8] bg-linear-to-b from-[#30b4f8] via-[#1494ec] via-20% to-[#1080d8]">
        <button aria-label="展开" className="-ml-2 flex size-[18px] shrink-0 items-center justify-center rounded-full bg-[#3c9cf0] inset-ring inset-ring-[#8cc8fc]">
          <Icon size={12}><path d="M10 3L5 8l5 5" stroke="#fff" strokeWidth="2.500" /></Icon>
        </button>
        <Icon><rect x="1" y="2" width="8" height="7" fill="#b8d8f0" stroke="#5080a8" /><path d="M2 12h8v2H2z" fill="#a8c0d8" /><path d="M10 4c1 1 1 3 0 4M12 3c2 2 2 4 0 6M14 1.500c2.500 3 2.500 6 0 9" stroke="#58e068" /></Icon>
        <Icon><circle cx="8" cy="8" r="7.500" fill="#c82838" /><path d="M4 3v10M6.500 1v14M9.500 1v14M12 3v10" stroke="#601830" /></Icon>
        <Icon><rect x="0.5" y="0.5" width="15" height="14" fill="#1c60c0" stroke="#8cc0f0" /><path d="M3 4c5-2 0 7 4 7s3-5 6-6M10 3l3 2-2 3" stroke="#fff" strokeWidth="1.500" /></Icon>
        <Icon><path d="M8 .5l7 2C15 9 13 13 8 15.500 3 13 1 9 1 2.500z" fill="#5ab0e8" stroke="#e0f0fc" /><path d="M4.500 7L7 10l5-5.500" stroke="#fff" strokeWidth="2" /></Icon>
        <span className="mr-[13px] ml-auto">15:32</span>
      </div>
    </footer>
  );
}

function App() {
  return (
    <div className="relative flex min-h-screen flex-col bg-black font-['Liberation_Sans','Noto_Sans_CJK_SC',sans-serif]">
      <MenuBar />
      <ToolBar />
      <main className="flex flex-1 border-b border-[#801418] bg-black">
        <div className="flex min-w-0 flex-1 flex-col border-l border-[#606468]">
          <PriceChart />
          <OscillatorChart />
          <Timeline />
          <TemplateTabs />
        </div>
        <QuotePanel />
      </main>
      <StatusBar />
      <TaskBar />
      <Banner />
    </div>
  );
}

export default App;
